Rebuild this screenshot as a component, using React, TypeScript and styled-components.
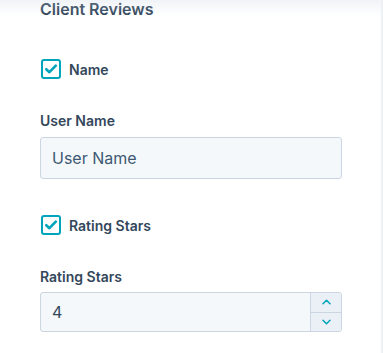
import React from "react";
import styled, { createGlobalStyle } from "styled-components";

const Global = createGlobalStyle`
  html, body { margin: 0; padding: 0; background: #ffffff; }
  body { font-family: "Inter", "Noto Sans", sans-serif; color: #33475b; }
`;

const Panel = styled.div`
  position: relative;
  width: 383px;
  height: 353px;
  box-sizing: border-box;
  overflow: hidden;
  background: #ffffff;
  border-right: 2px solid #eef1f4;
`;

const TopShade = styled.div`
  position: absolute;
  top: 0;
  left: 0;
  right: 0;
  height: 16px;
  background: linear-gradient(to bottom, rgba(203, 214, 226, 0.28), rgba(255, 255, 255, 0));
  pointer-events: none;
`;

const Content = styled.div`
  display: flex;
  flex-direction: column;
  padding: 0 39px 0 40px;
`;

const Title = styled.h2`
  margin: -2px 0 0;
  font-size: 16px;
  line-height: 22px;
  font-weight: 600;
  color: #33475b;
`;

const CheckRow = styled.label<{ $top: number }>`
  display: flex;
  align-items: center;
  gap: 8px;
  margin-top: ${(p) => p.$top}px;
  height: 20px;
  font-size: 14px;
  font-weight: 600;
  color: #33475b;
  padding-left: 1px;
`;

const Box = styled.span`
  display: flex;
  align-items: center;
  justify-content: center;
  width: 20px;
  height: 20px;
  box-sizing: border-box;
  border: 2px solid #00a4bd;
  border-radius: 3px;
  background: #ffffff;
`;

const Label = styled.div<{ $top: number }>`
  margin-top: ${(p) => p.$top}px;
  font-size: 14px;
  line-height: 18px;
  font-weight: 600;
  color: #33475b;
`;

const TextInput = styled.div`
  margin-top: 7px;
  height: 42px;
  box-sizing: border-box;
  display: flex;
  align-items: center;
  padding: 0 11px;
  background: #f5f8fa;
  border: 1px solid #cbd6e2;
  border-radius: 3px;
  font-size: 16px;
  font-weight: 400;
  color: #3e5873;
`;

const NumberInput = styled.div`
  margin-top: 6px;
  height: 40px;
  box-sizing: border-box;
  display: flex;
  background: #f5f8fa;
  border: 1px solid #cbd6e2;
  border-radius: 3px;
  overflow: hidden;
`;

const NumberValue = styled.div`
  flex: 1;
  display: flex;
  align-items: center;
  padding: 0 11px;
  font-size: 16px;
  color: #33475b;
`;

const Spinner = styled.div`
  width: 30px;
  display: flex;
  flex-direction: column;
  border-left: 1px solid #cbd6e2;
  background: #eaf0f6;
`;

const SpinButton = styled.div<{ $first?: boolean }>`
  flex: 1;
  display: flex;
  align-items: center;
  justify-content: center;
  border-top: ${(p) => (p.$first ? "none" : "1px solid #cbd6e2")};
`;

const Check = () => (
  <svg width="14" height="14" viewBox="0 0 14 14">
    <path d="M2.3 7.2 L5.4 10.2 L11.8 3.6" fill="none" stroke="#00a4bd" strokeWidth="2.6" strokeLinecap="round" strokeLinejoin="round" />
  </svg>
);

const Chevron = ({ up }: { up?: boolean }) => (
  <svg width="9" height="6" viewBox="0 0 9 6">
    <path d={up ? "M1 4.8 L4.5 1.3 L8 4.8" : "M1 1.2 L4.5 4.7 L8 1.2"} fill="none" stroke="#00a4bd" strokeWidth="1.5" strokeLinecap="round" strokeLinejoin="round" />
  </svg>
);

export default function App() {
  return (
    <>
      <Global />
      <Panel>
        <Content>
          <Title>Client Reviews</Title>
          <CheckRow $top={39}>
            <Box><Check /></Box>
            Name
          </CheckRow>
          <Label $top={33}>User Name</Label>
          <TextInput>User Name</TextInput>
          <CheckRow $top={36}>
            <Box><Check /></Box>
            Rating Stars
          </CheckRow>
          <Label $top={33}>Rating Stars</Label>
          <NumberInput>
            <NumberValue>4</NumberValue>
            <Spinner>
              <SpinButton $first><Chevron up /></SpinButton>
              <SpinButton><Chevron /></SpinButton>
            </Spinner>
          </NumberInput>
        </Content>
        <TopShade />
      </Panel>
    </>
  );
}
